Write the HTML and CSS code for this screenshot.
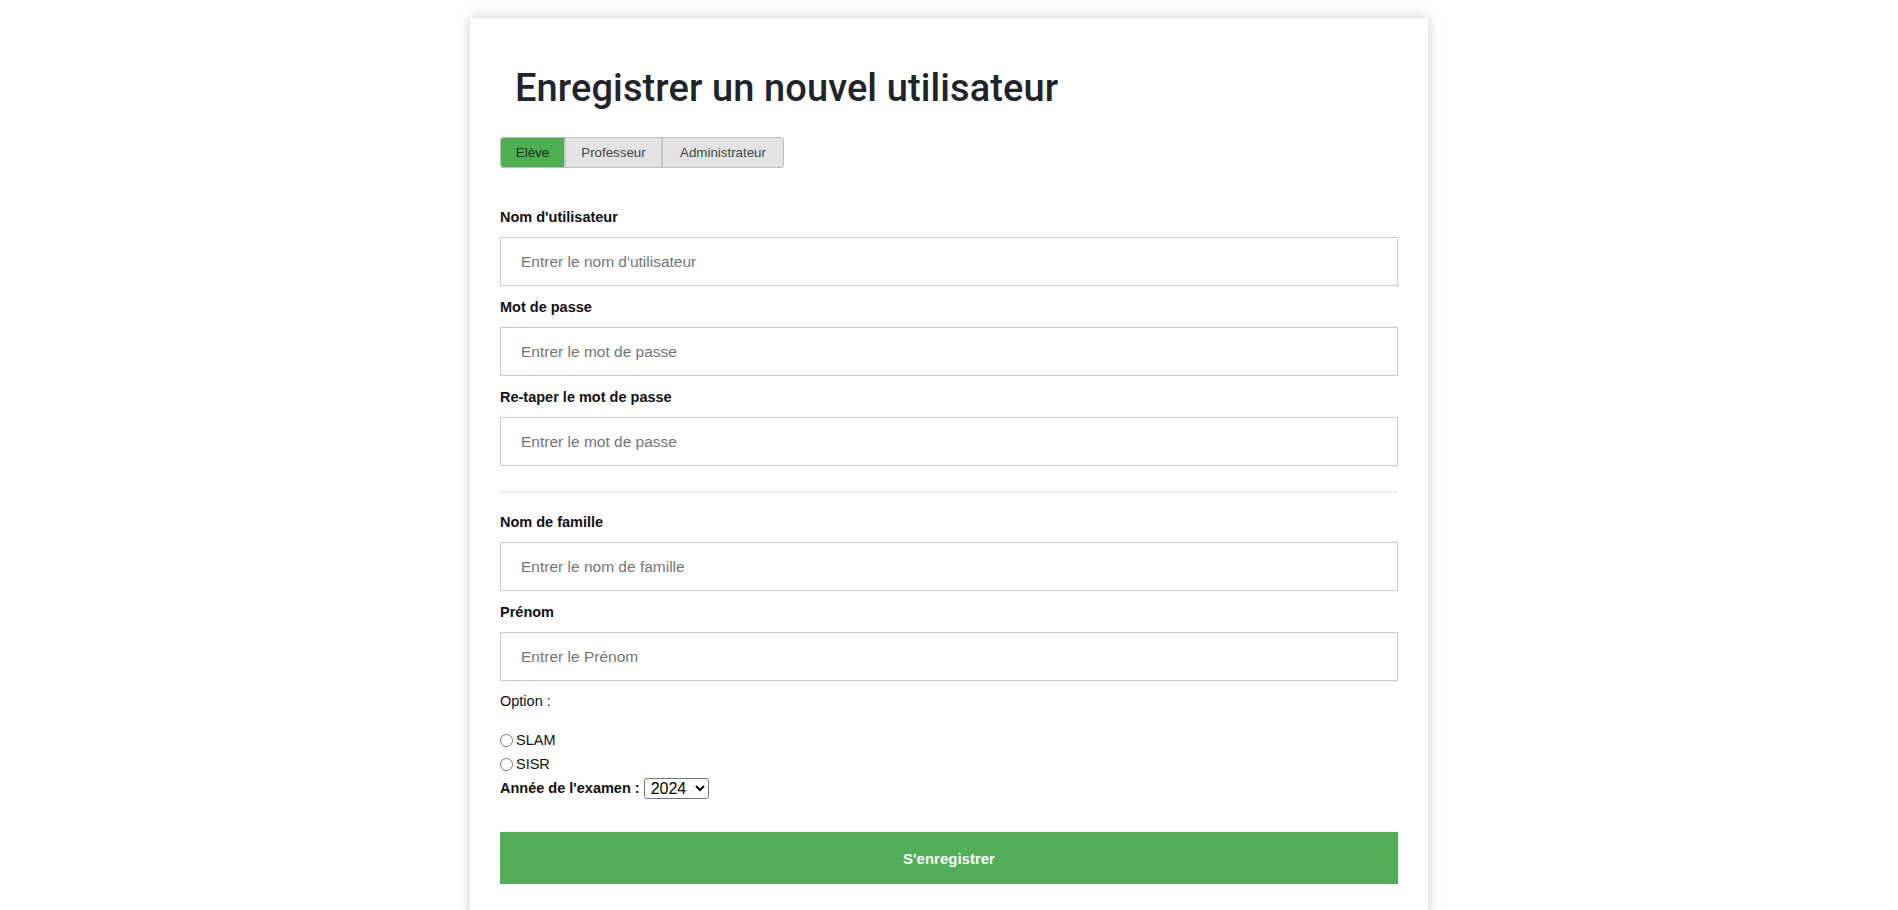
FILE: index.html
```html
<!DOCTYPE html>
<html lang="fr">
<head>
<meta charset="utf-8">
<title>Enregistrer un nouvel utilisateur</title>
<link rel="stylesheet" href="styles.css">
</head>
<body>
<div class="card">
  <h1 class="title">Enregistrer un nouvel utilisateur</h1>
  <div class="tabs">
    <button class="tab tab-eleve active" type="button">Elève</button>
    <button class="tab tab-prof" type="button">Professeur</button>
    <button class="tab tab-admin" type="button">Administrateur</button>
  </div>
  <form class="form">
    <label class="label" for="u">Nom d'utilisateur</label>
    <input class="field" id="u" type="text" placeholder="Entrer le nom d'utilisateur">
    <label class="label" for="p1">Mot de passe</label>
    <input class="field" id="p1" type="password" placeholder="Entrer le mot de passe">
    <label class="label" for="p2">Re-taper le mot de passe</label>
    <input class="field" id="p2" type="password" placeholder="Entrer le mot de passe">
    <hr class="sep">
    <label class="label" for="n">Nom de famille</label>
    <input class="field" id="n" type="text" placeholder="Entrer le nom de famille">
    <label class="label" for="pr">Prénom</label>
    <input class="field" id="pr" type="text" placeholder="Entrer le Prénom">
    <div class="option-title">Option :</div>
    <div class="radios">
      <label class="radio"><input type="radio" name="opt" class="radio-input">SLAM</label>
      <label class="radio"><input type="radio" name="opt" class="radio-input">SISR</label>
    </div>
    <div class="year">
      <span class="year-label">Année de l'examen :</span>
      <select class="year-select">
        <option>2024</option>
        <option>2025</option>
      </select>
    </div>
    <button class="submit" type="button">S'enregistrer</button>
  </form>
</div>
</body>
</html>
```
FILE: styles.css
```css
html, body {
  margin: 0;
  padding: 0;
  background: #ffffff;
}
body {
  font-family: "Liberation Sans", Arial, sans-serif;
  color: #1a1a1a;
}
.card {
  width: 898px;
  margin: 18px auto 0;
  padding: 30px 30px 30px;
  background: #fff;
  box-shadow: 0 0 12px rgba(0, 0, 0, 0.22);
}
.title {
  margin: 18px 0 27px;
  padding-left: 15px;
  font-family: Roboto, "Liberation Sans", sans-serif;
  font-weight: 500;
  font-size: 38px;
  line-height: 44px;
  letter-spacing: 0.1px;
  color: #212529;
}
.tabs {
  display: inline-flex;
  border: 1px solid #bdbdbd;
  border-radius: 3px;
  overflow: hidden;
  margin-bottom: 36px;
}
.tab {
  box-sizing: border-box;
  height: 29px;
  padding: 0;
  border: none;
  border-left: 2px solid #c8c8c8;
  background: #e3e3e3;
  color: #444;
  font-family: "Liberation Sans", Arial, sans-serif;
  font-size: 13.33px;
  text-align: center;
  cursor: pointer;
}
.tab-eleve {
  width: 63px;
  border-left: none;
}
.tab-prof {
  width: 97px;
}
.tab-admin {
  width: 122px;
}
.tab.active {
  background: #4caf50;
  color: #1e2a1e;
}
.form {
  display: flex;
  flex-direction: column;
}
.label {
  display: block;
  font-weight: bold;
  font-size: 14.5px;
  line-height: 24px;
  padding-top: 1px;
  color: #111;
}
.field {
  box-sizing: border-box;
  width: 100%;
  height: 49px;
  margin: 8px 0;
  padding: 0 20px;
  border: 1px solid #cacaca;
  font-family: "Liberation Sans", Arial, sans-serif;
  font-size: 15.5px;
  color: #222;
  background: #fff;
}
.field::placeholder {
  color: #757575;
}
.sep {
  width: 100%;
  margin: 17px 0 16px;
  border: none;
  height: 2px;
  background: #eeeeee;
}
.option-title {
  font-size: 14.5px;
  line-height: 24px;
  margin-top: 0;
  margin-bottom: 15px;
  color: #111;
}
.radios {
  display: flex;
  flex-direction: column;
}
.radio {
  display: flex;
  align-items: center;
  font-size: 14.5px;
  line-height: 24px;
  color: #111;
}
.radio-input {
  margin: 0 3px 0 0;
  width: 13px;
  height: 13px;
}
.year {
  display: flex;
  align-items: center;
  height: 24px;
  gap: 4px;
}
.year-label {
  font-weight: bold;
  font-size: 14.5px;
  color: #111;
}
.year-select {
  box-sizing: border-box;
  width: 65px;
  font-family: "Liberation Sans", Arial, sans-serif;
  font-size: 16px;
  height: 21px;
  padding: 0 0 0 2px;
  border: 1px solid #767676;
  border-radius: 3px;
  background: #fff;
  color: #000;
}
.submit {
  margin-top: 32px;
  width: 100%;
  height: 52px;
  border: none;
  background: #52ae58;
  color: #fff;
  font-family: "Liberation Sans", Arial, sans-serif;
  font-weight: bold;
  font-size: 15px;
  cursor: pointer;
}
```
